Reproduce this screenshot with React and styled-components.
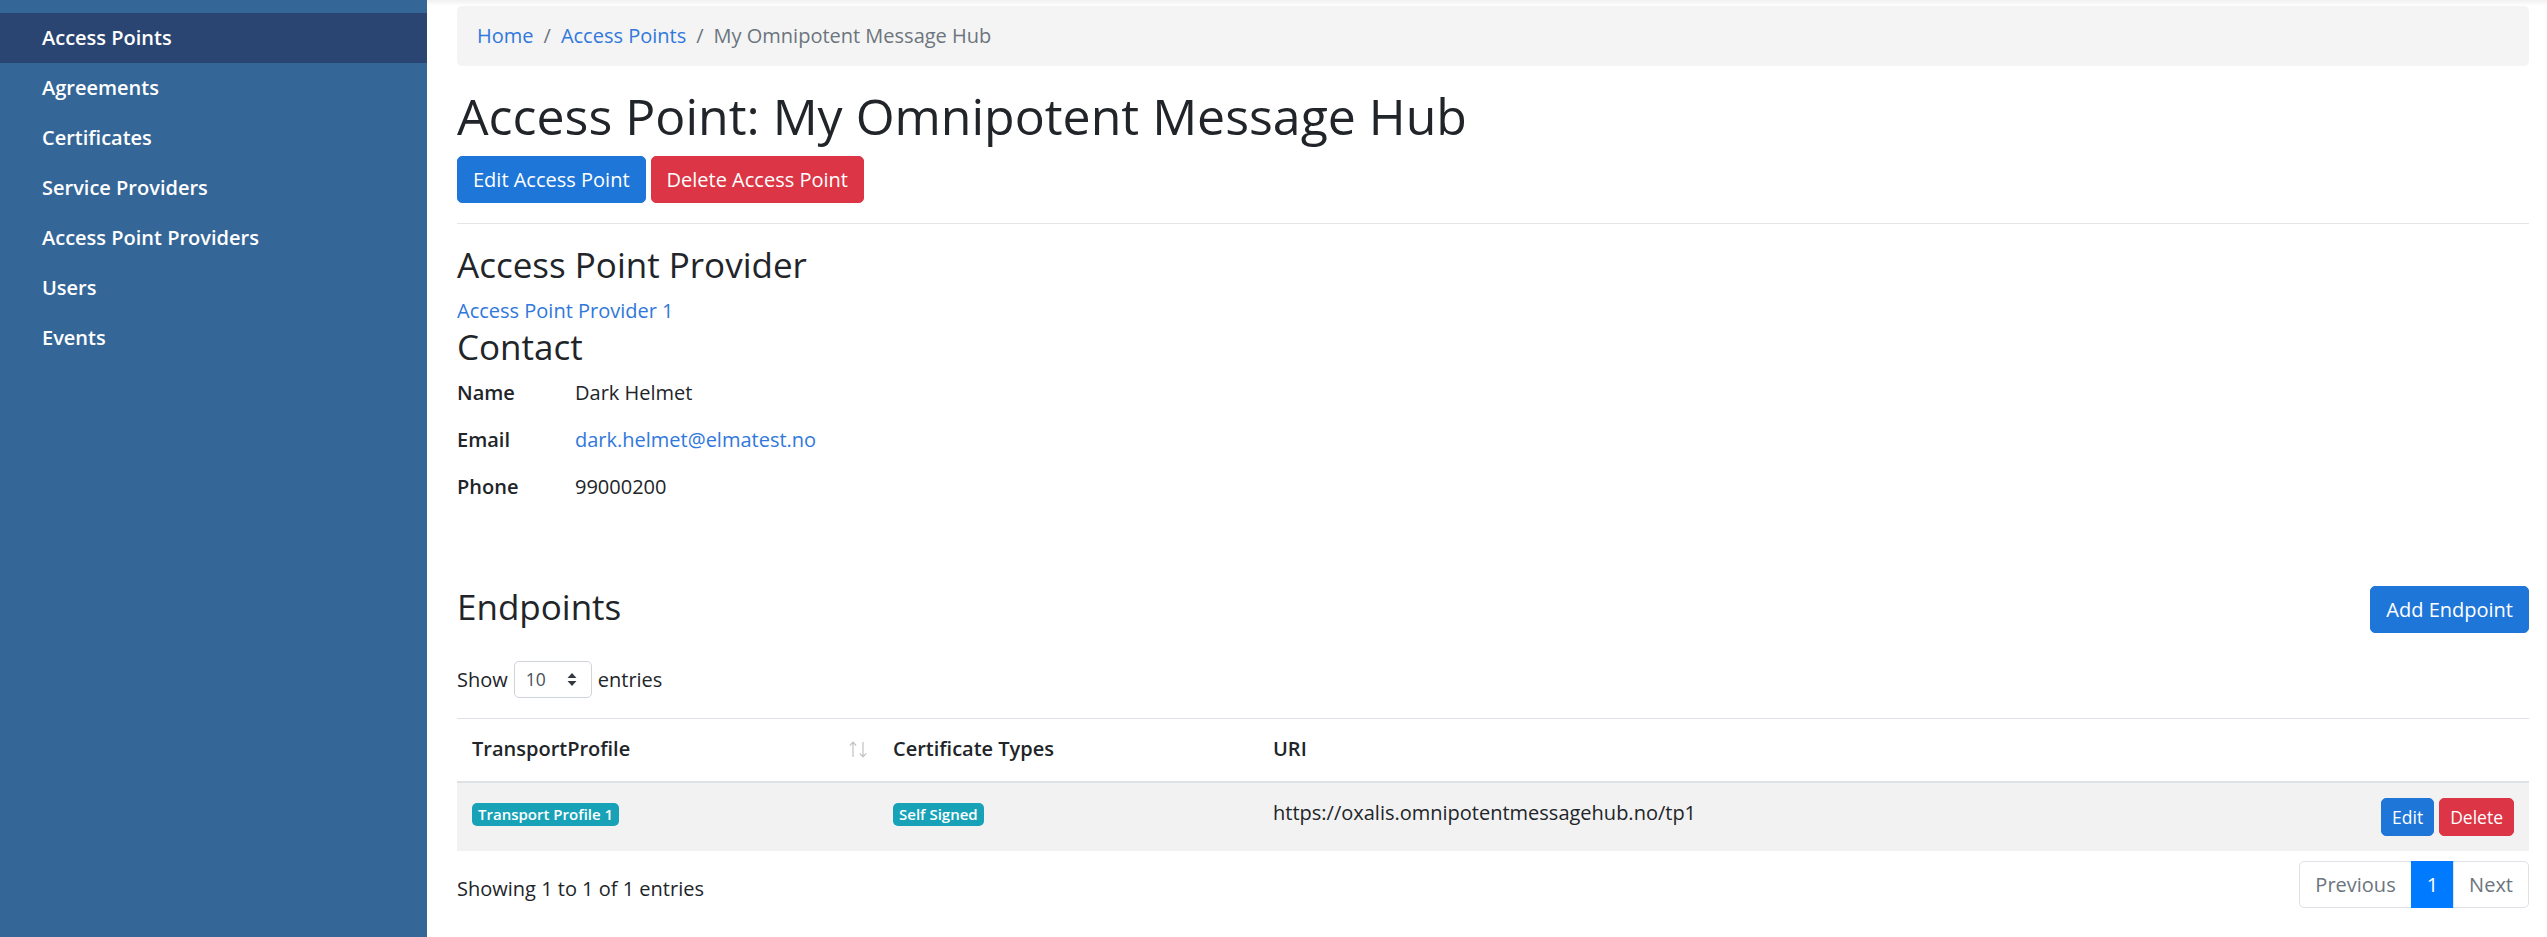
import React from "react";
import styled, { createGlobalStyle } from "styled-components";

const GlobalStyle = createGlobalStyle`
  html, body { margin: 0; padding: 0; }
  body {
    font-family: "Open Sans", "Liberation Sans", sans-serif;
    font-size: 20px;
    line-height: 1.5;
    color: #212529;
    background: #fff;
  }
  * { box-sizing: border-box; }
`;

const Layout = styled.div`
  display: flex;
  min-height: 937px;
`;

const Sidebar = styled.nav`
  width: 427px;
  flex-shrink: 0;
  background: #346698;
  padding-top: 13px;
`;

const NavList = styled.ul`
  list-style: none;
  margin: 0;
  padding: 0;
`;

const NavItem = styled.li`
  height: 50px;
  padding: 10px 42px;
  font-size: 20px;
  line-height: 30px;
  font-weight: 600;
  color: #fff;
  background: ${(p) => (p.$active ? "#2a4572" : "transparent")};
`;

const Main = styled.main`
  flex: 1;
  min-width: 0;
  padding: 6px 18px 0 30px;
  background: linear-gradient(to bottom, #f1f1f1 0, #ffffff 6px);
`;

const Breadcrumb = styled.ol`
  display: flex;
  list-style: none;
  margin: 0 0 20px;
  padding: 15px 20px;
  height: 60px;
  background: #f4f4f4;
  border-radius: 5px;
  font-size: 20px;
  line-height: 30px;
`;

const Crumb = styled.li`
  color: ${(p) => (p.$active ? "#6c757d" : "#3078dc")};
  &:not(:first-child)::before {
    content: "/";
    color: #6c757d;
    padding: 0 10px;
  }
`;

const PageTitle = styled.h1`
  margin: 0 0 10px;
  font-size: 50px;
  line-height: 1.2;
  font-weight: 400;
`;

const ButtonRow = styled.div`
  display: flex;
  gap: 5px;
`;

const Button = styled.button`
  font-family: inherit;
  border: 1px solid transparent;
  color: #fff;
  background: ${(p) => (p.$variant === "danger" ? "#dc3545" : "#1e76d9")};
  border-color: ${(p) => (p.$variant === "danger" ? "#dc3545" : "#1e76d9")};
  font-size: ${(p) => (p.$small ? "17.5px" : "20px")};
  line-height: 1.5;
  padding: ${(p) => (p.$small ? "5px 10px" : "7.5px 15px")};
  border-radius: 5px;
  font-weight: 400;
  cursor: pointer;
`;

const Divider = styled.hr`
  margin: 20px 0;
  border: 0;
  border-top: 1px solid #e5e5e5;
`;

const SectionTitle = styled.h3`
  margin: 0 0 10px;
  font-size: 35px;
  line-height: 1.2;
  font-weight: 400;
`;

const Link = styled.a`
  color: #3078dc;
  text-decoration: none;
`;

const BlockLink = styled(Link)`
  display: block;
`;

const ContactList = styled.dl`
  display: grid;
  grid-template-columns: 118px 1fr;
  row-gap: 17px;
  margin: 0;
`;

const Term = styled.dt`
  font-weight: 600;
  margin: 0;
`;

const Detail = styled.dd`
  margin: 0;
`;

const EndpointsHeader = styled.div`
  display: flex;
  justify-content: space-between;
  align-items: flex-start;
  margin-top: 84px;
`;

const LengthRow = styled.label`
  display: flex;
  align-items: center;
  gap: 6px;
  margin-top: 23px;
  height: 37px;
`;

const SelectBox = styled.div`
  display: flex;
  align-items: center;
  justify-content: space-between;
  width: 78px;
  height: 37px;
  padding: 0 14px 0 11px;
  border: 1px solid #ced4da;
  border-radius: 5px;
  font-size: 17.5px;
  color: #495057;
`;

const Table = styled.table`
  width: 100%;
  margin-top: 20px;
  border-collapse: collapse;
  table-layout: fixed;
`;

const Th = styled.th`
  text-align: left;
  font-weight: 600;
  padding: 15px 15px 17px;
  line-height: 30px;
  border-top: 1px solid #dee2e6;
  border-bottom: 2px solid #dee2e6;
  vertical-align: bottom;
`;

const SortHead = styled.div`
  display: flex;
  justify-content: space-between;
  align-items: center;
  margin-right: -4px;
`;

const Tr = styled.tr`
  background: ${(p) => (p.$striped ? "#f2f2f2" : "#fff")};
`;

const Td = styled.td`
  padding: 15px;
  line-height: 30px;
  vertical-align: top;
  border-top: 1px solid #dee2e6;
`;

const Badge = styled.span`
  display: inline-block;
  padding: 3.75px 6px;
  font-size: 15px;
  font-weight: 600;
  line-height: 1;
  color: #fff;
  background: #17a2b8;
  border-radius: 5px;
  white-space: nowrap;
  vertical-align: baseline;
`;

const Actions = styled.div`
  display: flex;
  justify-content: flex-end;
  gap: 5px;
`;

const FooterRow = styled.div`
  display: flex;
  justify-content: space-between;
  align-items: flex-start;
  margin-top: 10px;
`;

const Info = styled.div`
  padding-top: 13px;
`;

const Pagination = styled.ul`
  display: flex;
  list-style: none;
  margin: 0;
  padding: 0;
`;

const PageItem = styled.li`
  padding: 10px 15px;
  line-height: 25px;
  font-size: 20px;
  border: 1px solid ${(p) => (p.$active ? "#007bff" : "#dee2e6")};
  background: ${(p) => (p.$active ? "#007bff" : "#fff")};
  color: ${(p) => (p.$active ? "#fff" : "#6c757d")};
  &:not(:first-child) { margin-left: -1px; }
  &:first-child { border-radius: 5px 0 0 5px; }
  &:last-child { border-radius: 0 5px 5px 0; }
`;

const SelectArrows = () => (
  <svg width="10" height="13" viewBox="0 0 10 13">
    <path d="M5 0 L9.5 5 H0.5 Z M5 13 L0.5 8 H9.5 Z" fill="#343a40" />
  </svg>
);

const SortIcon = () => (
  <svg width="18" height="17" viewBox="0 0 18 17" fill="none" stroke="#bfc1c3" strokeWidth="1.2">
    <path d="M4 16 V1.2 M0.8 4.6 L4 1.2 L7.2 4.6" />
    <path d="M14 1 V15.8 M10.8 12.4 L14 15.8 L17.2 12.4" />
  </svg>
);

const navItems = [
  "Access Points",
  "Agreements",
  "Certificates",
  "Service Providers",
  "Access Point Providers",
  "Users",
  "Events",
];

export default function App() {
  return (
    <>
      <GlobalStyle />
      <Layout>
        <Sidebar>
          <NavList>
            {navItems.map((n, i) => (
              <NavItem key={n} $active={i === 0}>
                {n}
              </NavItem>
            ))}
          </NavList>
        </Sidebar>
        <Main>
          <Breadcrumb>
            <Crumb>Home</Crumb>
            <Crumb>Access Points</Crumb>
            <Crumb $active>My Omnipotent Message Hub</Crumb>
          </Breadcrumb>
          <PageTitle>Access Point: My Omnipotent Message Hub</PageTitle>
          <ButtonRow>
            <Button>Edit Access Point</Button>
            <Button $variant="danger">Delete Access Point</Button>
          </ButtonRow>
          <Divider />
          <SectionTitle>Access Point Provider</SectionTitle>
          <BlockLink href="#">Access Point Provider 1</BlockLink>
          <SectionTitle>Contact</SectionTitle>
          <ContactList>
            <Term>Name</Term>
            <Detail>Dark Helmet</Detail>
            <Term>Email</Term>
            <Detail>
              <Link href="#">dark.helmet@elmatest.no</Link>
            </Detail>
            <Term>Phone</Term>
            <Detail>99000200</Detail>
          </ContactList>

          <EndpointsHeader>
            <SectionTitle>Endpoints</SectionTitle>
            <Button>Add Endpoint</Button>
          </EndpointsHeader>
          <LengthRow>
            Show
            <SelectBox>
              <span>10</span>
              <SelectArrows />
            </SelectBox>
            entries
          </LengthRow>
          <Table>
            <colgroup>
              <col style={{ width: 421 }} />
              <col style={{ width: 380 }} />
              <col />
              <col style={{ width: 165 }} />
            </colgroup>
            <thead>
              <tr>
                <Th>
                  <SortHead>
                    <span>TransportProfile</span>
                    <SortIcon />
                  </SortHead>
                </Th>
                <Th>Certificate Types</Th>
                <Th>URI</Th>
                <Th />
              </tr>
            </thead>
            <tbody>
              <Tr $striped>
                <Td>
                  <Badge>Transport Profile 1</Badge>
                </Td>
                <Td>
                  <Badge>Self Signed</Badge>
                </Td>
                <Td>https://oxalis.omnipotentmessagehub.no/tp1</Td>
                <Td>
                  <Actions>
                    <Button $small>Edit</Button>
                    <Button $small $variant="danger">Delete</Button>
                  </Actions>
                </Td>
              </Tr>
            </tbody>
          </Table>
          <FooterRow>
            <Info>Showing 1 to 1 of 1 entries</Info>
            <Pagination>
              <PageItem>Previous</PageItem>
              <PageItem $active>1</PageItem>
              <PageItem>Next</PageItem>
            </Pagination>
          </FooterRow>
        </Main>
      </Layout>
    </>
  );
}
